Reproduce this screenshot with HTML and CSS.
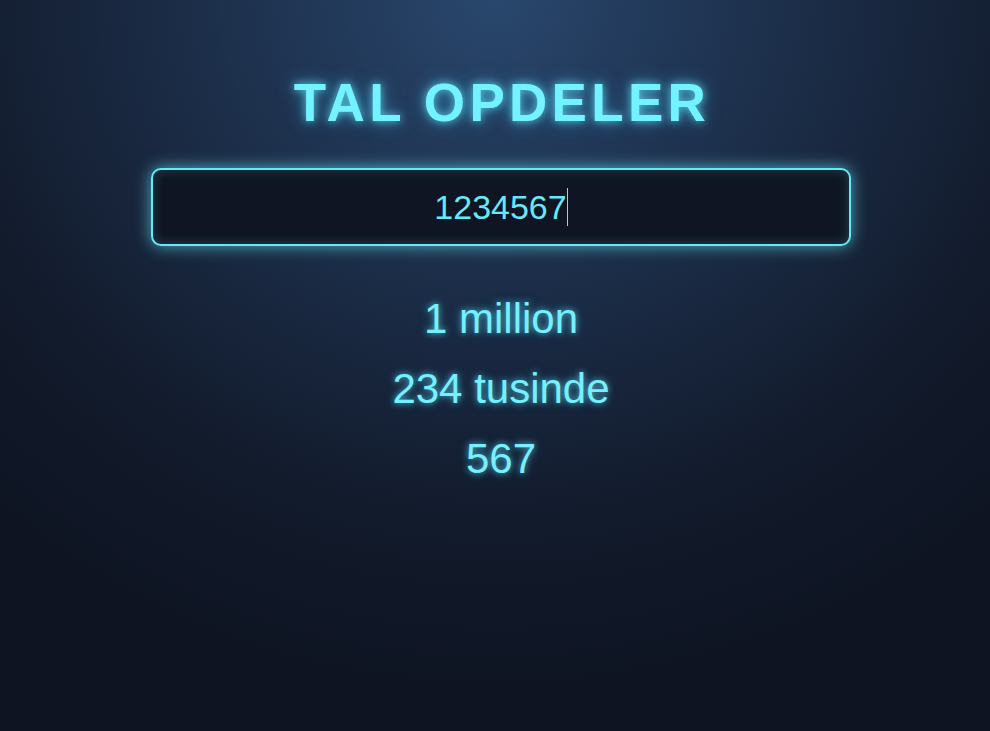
FILE: index.html
```html
<!DOCTYPE html>
<html lang="da">
<head>
<meta charset="utf-8">
<title>Tal Opdeler</title>
<link rel="stylesheet" href="styles.css">
</head>
<body>
<main class="app">
  <h1 class="title">TAL OPDELER</h1>
  <div class="field">
    <span class="value">1234567</span><span class="caret"></span>
  </div>
  <div class="results">
    <div class="part">1 million</div>
    <div class="part">234 tusinde</div>
    <div class="part">567</div>
  </div>
</main>
</body>
</html>
```

FILE: styles.css
```css
html, body {
  margin: 0;
  padding: 0;
  height: 100%;
}
body {
  background: radial-gradient(ellipse 75% 95% at 50% 0%, #29476d 0%, #1c2e49 40%, #121b2c 75%, #0e1422 100%);
  background-color: #0e1422;
  font-family: "Liberation Sans", Arial, sans-serif;
  color: #67e8f9;
  min-height: 731px;
}
.app {
  display: flex;
  flex-direction: column;
  align-items: center;
  padding-top: 73px;
  padding-left: 12px;
}
.title {
  margin: 0;
  font-size: 53px;
  font-weight: 700;
  letter-spacing: 4.3px;
  line-height: 60px;
  color: #72f3ff;
  text-shadow: 0 0 8px rgba(103, 232, 249, 0.8), 0 0 18px rgba(56, 189, 248, 0.6);
  padding-left: 2px;
}
.field {
  margin-top: 35px;
  box-sizing: border-box;
  width: 700px;
  height: 78px;
  border: 2px solid #67e8f9;
  border-radius: 10px;
  background: #0f1522;
  box-shadow: 0 0 16px rgba(103, 232, 249, 0.7), inset 0 0 12px rgba(103, 232, 249, 0.22);
  display: flex;
  align-items: center;
  justify-content: center;
  font-size: 34px;
  color: #67e8f9;
}
.caret {
  display: inline-block;
  width: 1px;
  height: 38px;
  background: #67e8f9;
}
.results {
  margin-top: 38px;
  display: flex;
  flex-direction: column;
  align-items: center;
}
.part {
  font-size: 42px;
  line-height: 70px;
  color: #74f0ff;
  text-shadow: 0 0 6px rgba(103, 232, 249, 0.7), 0 0 12px rgba(56, 189, 248, 0.35);
}
```
